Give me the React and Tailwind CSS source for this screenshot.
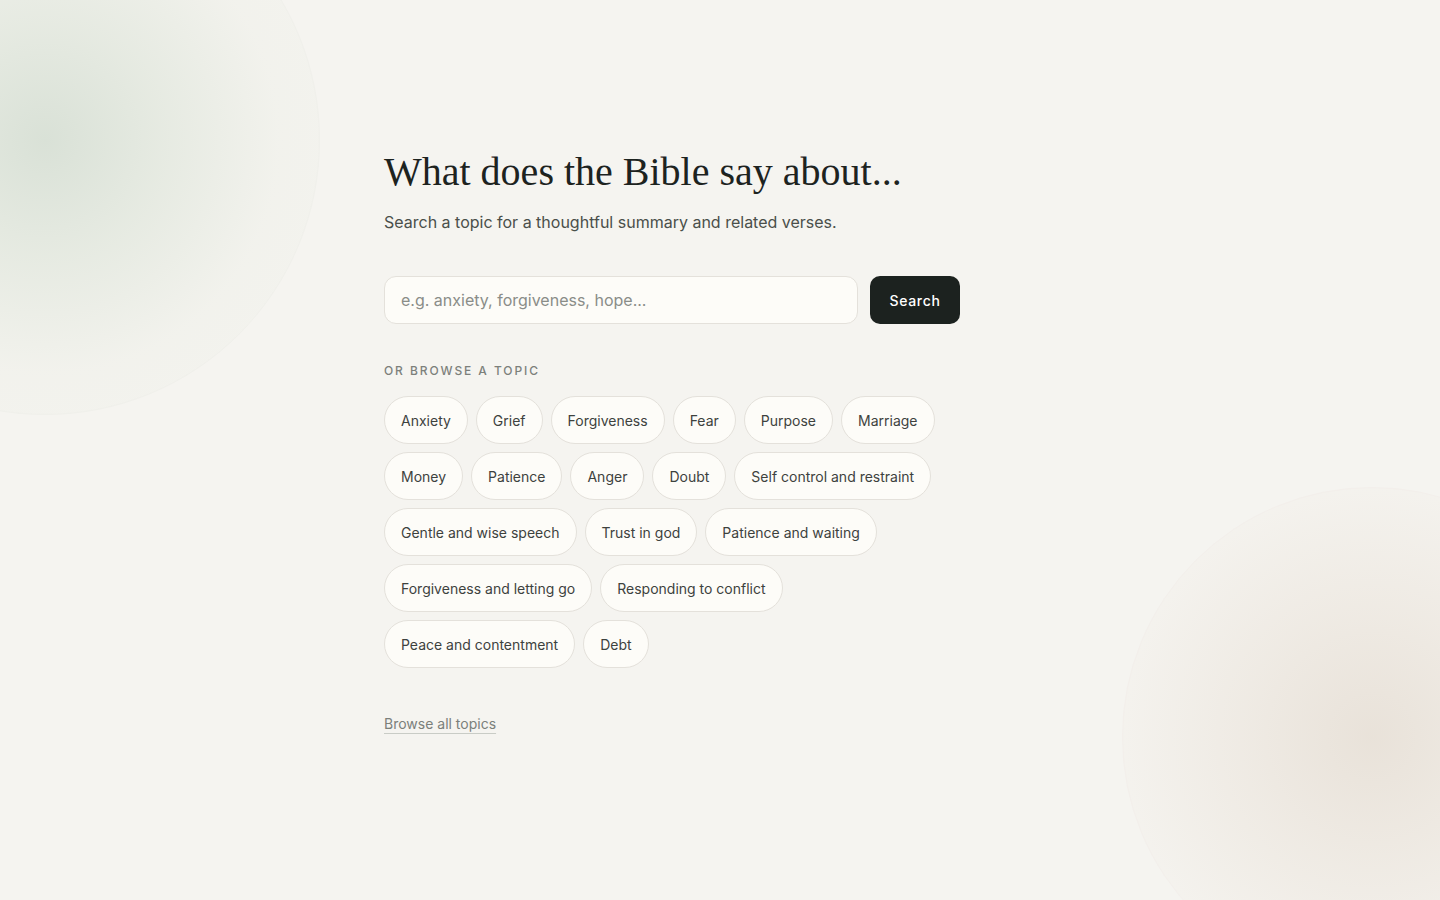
import React from 'react';

const topics = [
  'Anxiety',
  'Grief',
  'Forgiveness',
  'Fear',
  'Purpose',
  'Marriage',
  'Money',
  'Patience',
  'Anger',
  'Doubt',
  'Self control and restraint',
  'Gentle and wise speech',
  'Trust in god',
  'Patience and waiting',
  'Forgiveness and letting go',
  'Responding to conflict',
  'Peace and contentment',
  'Debt',
];

const App = () => {
  return (
    <div className="relative min-h-[900px] overflow-hidden bg-[#f5f4f0] font-['Inter','Liberation_Sans',sans-serif]">
      {/* Background glows */}
      <div className="pointer-events-none absolute -left-[230px] -top-[135px] h-[550px] w-[550px] rounded-full border border-[#f0f0eb] bg-[radial-gradient(circle,rgba(214,223,212,0.9)_0%,rgba(222,229,218,0.65)_30%,rgba(236,238,230,0.35)_60%,rgba(243,243,238,0.15)_100%)]" />
      <div className="pointer-events-none absolute left-[1122px] top-[487px] h-[500px] w-[500px] rounded-full border border-[#f3efeb] bg-[radial-gradient(circle,rgba(232,225,216,0.95)_0%,rgba(236,230,222,0.7)_35%,rgba(242,238,232,0.35)_70%,rgba(246,243,239,0.2)_100%)]" />

      <main className="relative mx-auto w-[768px] px-12 pt-[148px]">
        <div className="max-w-[576px]">
          <h1 className="font-['Liberation_Serif','DejaVu_Serif',serif] text-[40px] leading-[48px] text-[#1d231f]">
            What does the Bible say about...
          </h1>
          <p className="mt-[14px] text-[16px] leading-6 text-[#4a4f4a]">
            Search a topic for a thoughtful summary and related verses.
          </p>

          <form className="mt-[42px] flex gap-3" onSubmit={(e) => e.preventDefault()}>
            <input
              type="text"
              placeholder="e.g. anxiety, forgiveness, hope..."
              className="h-12 flex-1 rounded-xl border border-[#e4e1db] bg-[#fdfcf8] px-4 text-[16px] text-[#1d231f] placeholder:text-[#8a8d88] focus:outline-none"
            />
            <button
              type="submit"
              className="h-12 w-[90px] rounded-[10px] bg-[#1c221f] text-[14px] font-medium tracking-wider text-white"
            >
              Search
            </button>
          </form>

          <div className="mt-[39px] text-[12px] font-medium uppercase leading-4 tracking-[0.16em] text-[#7c807b]">
            Or browse a topic
          </div>

          <div className="mt-[17px] flex flex-wrap gap-2">
            {topics.map((t) => (
              <button
                key={t}
                className="h-12 rounded-full border border-[#e4e1db] bg-[#fdfcf8] px-4 text-[14px] text-[#3d423e]"
              >
                {t}
              </button>
            ))}
          </div>

          <a
            href="#"
            className="mt-[46px] inline-block text-[14px] leading-5 text-[#7b807b] underline decoration-[#c9ccc6] underline-offset-4"
          >
            Browse all topics
          </a>
        </div>
      </main>
    </div>
  );
};

export default App;
